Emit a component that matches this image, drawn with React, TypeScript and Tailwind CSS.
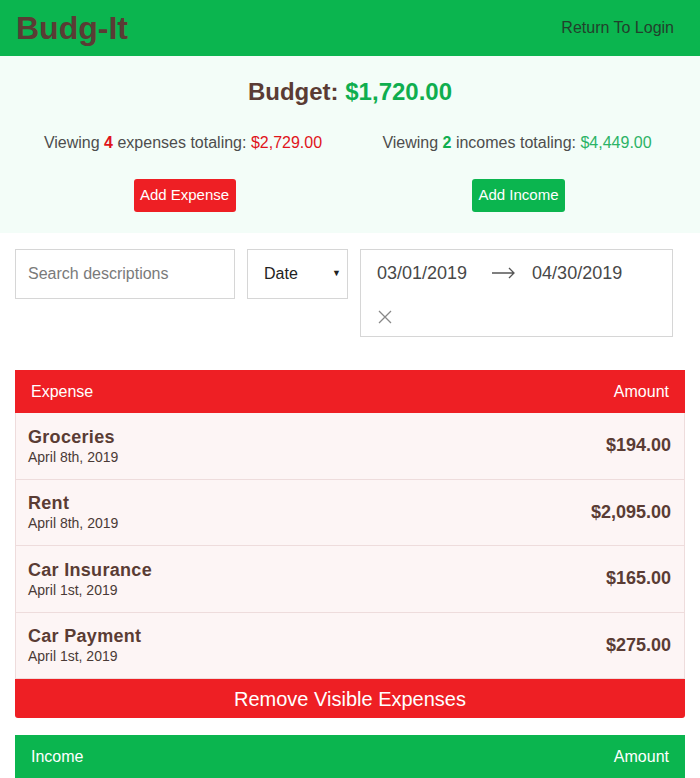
import React from "react";

const expenses = [
  { name: "Groceries", date: "April 8th, 2019", amount: "$194.00" },
  { name: "Rent", date: "April 8th, 2019", amount: "$2,095.00" },
  { name: "Car Insurance", date: "April 1st, 2019", amount: "$165.00" },
  { name: "Car Payment", date: "April 1st, 2019", amount: "$275.00" },
];

export default function App() {
  return (
    <div className="min-h-[778px] bg-white text-[#5a3c34]" style={{ fontFamily: '"Liberation Sans", Arial, sans-serif' }}>
      <header className="h-[56px] bg-[#0bb54f] flex items-center justify-between pl-4 pr-[26px]">
        <h1 className="text-[32px] font-bold text-[#5a3c34] leading-none">Budg-It</h1>
        <span className="text-[16px] text-[#22402c]">Return To Login</span>
      </header>

      <section className="bg-[#f3fdf8] pt-[22px] pb-[21px] px-4">
        <h2 className="text-center text-[24px] font-bold leading-[28px]">
          Budget: <span className="text-[#0fae4f]">$1,720.00</span>
        </h2>
        <div className="grid grid-cols-2 mt-[28px]">
          <div className="flex flex-col items-center">
            <p className="text-[16px] leading-[18px] text-[#4d4d4d]">
              Viewing <span className="font-bold text-[#e0141b]">4</span> expenses totaling:{" "}
              <span className="text-[#e0141b]">$2,729.00</span>
            </p>
            <button className="mt-[27px] h-[33px] w-[102px] rounded-[3px] bg-[#ee1f24] text-white text-[15px] ml-[3px]">Add Expense</button>
          </div>
          <div className="flex flex-col items-center">
            <p className="text-[16px] leading-[18px] text-[#4d4d4d]">
              Viewing <span className="font-bold text-[#0fae4f]">2</span> incomes totaling:{" "}
              <span className="text-[#2bb366]">$4,449.00</span>
            </p>
            <button className="mt-[27px] h-[33px] w-[93px] rounded-[3px] bg-[#0bb54f] text-white text-[15px] ml-[3px]">Add Income</button>
          </div>
        </div>
      </section>

      <div className="flex items-start gap-3 pl-[15px] pt-4">
        <div className="w-[220px] h-[50px] border border-[#d6d6d6] flex items-center px-3">
          <span className="text-[16px] text-[#7a7a7a]">Search descriptions</span>
        </div>
        <div className="w-[101px] h-[50px] border border-[#d6d6d6] flex items-center justify-between pl-4 pr-[6px]">
          <span className="text-[16px] text-[#222]">Date</span>
          <span className="text-[9px] text-[#222]">▼</span>
        </div>
        <div className="w-[313px] h-[88px] border border-[#d6d6d6] pl-4 pt-[11px]">
          <div className="flex items-center text-[18px] text-[#484848] leading-[24px]">
            <span>03/01/2019</span>
            <svg width="24" height="12" viewBox="0 0 24 12" className="ml-[25px] mr-[16px]" fill="none" stroke="#555" strokeWidth="1.3">
              <path d="M0 6h22M17 1l5 5-5 5" />
            </svg>
            <span>04/30/2019</span>
          </div>
          <div className="mt-[25px] ml-[1px]">
            <svg width="14" height="14" viewBox="0 0 14 14" stroke="#888" strokeWidth="1.3">
              <path d="M1 1l12 12M13 1L1 13" />
            </svg>
          </div>
        </div>
      </div>

      <div className="mx-[15px] mt-[33px]">
        <div className="h-[43px] bg-[#ee1f24] flex items-center justify-between px-4 text-white text-[16px]">
          <span>Expense</span>
          <span>Amount</span>
        </div>
        {expenses.map((e) => (
          <div key={e.name} className="h-[66.5px] bg-[#fdf5f5] border-x border-b border-[#eedcdc] flex items-center justify-between pl-[12px] pr-[13px]">
            <div className="flex flex-col">
              <span className="text-[18px] font-bold leading-[22px] tracking-[0.3px]">{e.name}</span>
              <span className="text-[14px] leading-[18px] text-[#4a3a36]">{e.date}</span>
            </div>
            <span className="text-[18px] font-bold">{e.amount}</span>
          </div>
        ))}
        <button className="w-full h-[39px] bg-[#ee1f24] rounded-b-[3px] text-white text-[20px]">Remove Visible Expenses</button>
      </div>

      <div className="mx-[15px] mt-[17px]">
        <div className="h-[43px] bg-[#0bb54f] flex items-center justify-between px-4 text-white text-[16px]">
          <span>Income</span>
          <span>Amount</span>
        </div>
      </div>
    </div>
  );
}
